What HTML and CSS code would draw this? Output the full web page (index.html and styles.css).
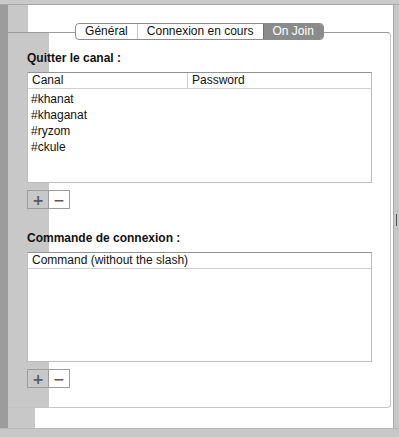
FILE: index.html
```html
<!DOCTYPE html>
<html lang="fr">
<head>
  <meta charset="UTF-8">
  <title>On Join</title>
  <link rel="stylesheet" href="styles.css">
</head>
<body>
  <div class="screen">
    <div class="topbar"></div>
    <div class="middle">
      <div class="edge"></div>
      <div class="window">
        <div class="tabs-row">
          <div class="tabs">
            <div class="tab">Général</div>
            <div class="tab">Connexion en cours</div>
            <div class="tab active">On Join</div>
          </div>
        </div>
        <div class="tabbox">
          <h2>Quitter le canal :</h2>
          <div class="list list-channels">
            <div class="list-head">
              <div class="col col-canal">Canal</div>
              <div class="col">Password</div>
            </div>
            <div class="rows">
              <div class="row">#khanat</div>
              <div class="row">#khaganat</div>
              <div class="row">#ryzom</div>
              <div class="row">#ckule</div>
            </div>
          </div>
          <div class="buttons">
            <button>+</button>
            <button>−</button>
          </div>

          <h2 class="second">Commande de connexion :</h2>
          <div class="list list-commands">
            <div class="list-head">
              <div class="col">Command (without the slash)</div>
            </div>
          </div>
          <div class="buttons">
            <button>+</button>
            <button>−</button>
          </div>
        </div>
        <div class="window-foot"></div>
      </div>
      <div class="right-edge">
        <div class="handle"></div>
      </div>
    </div>
    <div class="bottombar"></div>
  </div>
</body>
</html>
```

FILE: styles.css
```css
* {
  box-sizing: border-box;
  margin: 0;
  padding: 0;
}

body {
  font-family: 'Liberation Sans', Arial, sans-serif;
  font-size: 12px;
  color: #111;
  background-color: #c8c8c8;
}

.screen {
  width: 399px;
  height: 437px;
  display: flex;
  flex-direction: column;
  overflow: hidden;
}

.topbar {
  height: 5px;
  background-color: #c9c9c9;
  border-bottom: 1px solid #a6a6a6;
}

.middle {
  flex: 1;
  display: flex;
}

.edge {
  width: 8px;
  background-color: #9c9c9c;
}

.window {
  flex: 1;
  display: flex;
  flex-direction: column;
  padding-top: 18px;
  background: linear-gradient(to right, #c8c8c8 20px, #fff 20px);
}

.tabs-row {
  display: flex;
  justify-content: center;
  margin-right: 2px;
  margin-bottom: -8px;
  position: relative;
  z-index: 1;
}

.tabs {
  display: flex;
  border: 1px solid #8c8c8c;
  border-radius: 4px;
  background-color: #fff;
  overflow: hidden;
}

.tab {
  padding: 0 9px;
  line-height: 15px;
  border-left: 1px solid #c4c4c4;
}

.tab:first-child {
  border-left: none;
}

.tab.active {
  background-color: #8b8b8b;
  border-left-color: #707070;
  color: #fff;
}

.tabbox {
  margin-right: 2px;
  padding: 18px 0 19px 19px;
  border-top: 1px solid #9a9a9a;
  border-right: 1px solid #c4c4c4;
  border-bottom: 1px solid #c4c4c4;
  border-radius: 0 4px 4px 0;
  background: linear-gradient(to right, #c8c8c8 41px, #fff 41px);
}

.tabbox h2 {
  font-size: 12px;
  font-weight: bold;
  line-height: 15px;
  margin-bottom: 6px;
}

.tabbox h2.second {
  margin-top: 22px;
}

.list {
  width: 345px;
  background-color: #fff;
  border: 1px solid #bcbcbc;
  border-top-color: #929292;
}

.list-channels {
  height: 111px;
}

.list-commands {
  height: 110px;
}

.list-head {
  display: flex;
  height: 16px;
  line-height: 15px;
  border-bottom: 1px solid #cfcfcf;
}

.col {
  padding-left: 4px;
}

.col-canal {
  width: 160px;
  border-right: 1px solid #cfcfcf;
}

.rows {
  padding-top: 2px;
}

.row {
  height: 16px;
  line-height: 16px;
  padding-left: 3px;
}

.buttons {
  display: flex;
  margin-top: 7px;
}

.buttons button {
  width: 22px;
  height: 19px;
  border: 1px solid #9c9c9c;
  background: transparent;
  font-family: 'DejaVu Sans', sans-serif;
  font-size: 14px;
  font-weight: bold;
  line-height: 16px;
  color: #5a5a5a;
}

.buttons button + button {
  margin-left: -1px;
}

.window-foot {
  flex: 1;
  background: linear-gradient(to right, #c8c8c8 27px, #fff 27px);
}

.right-edge {
  width: 6px;
  background-color: #c8c8c8;
  border-left: 1px solid #a9a9a9;
  display: flex;
  flex-direction: column;
  justify-content: center;
  padding: 6px 0 0 2px;
}

.handle {
  width: 1px;
  height: 12px;
  background-color: #555;
}

.bottombar {
  height: 9px;
  background-color: #c8c8c8;
  border-top: 1px solid #b8b8b8;
}
```
